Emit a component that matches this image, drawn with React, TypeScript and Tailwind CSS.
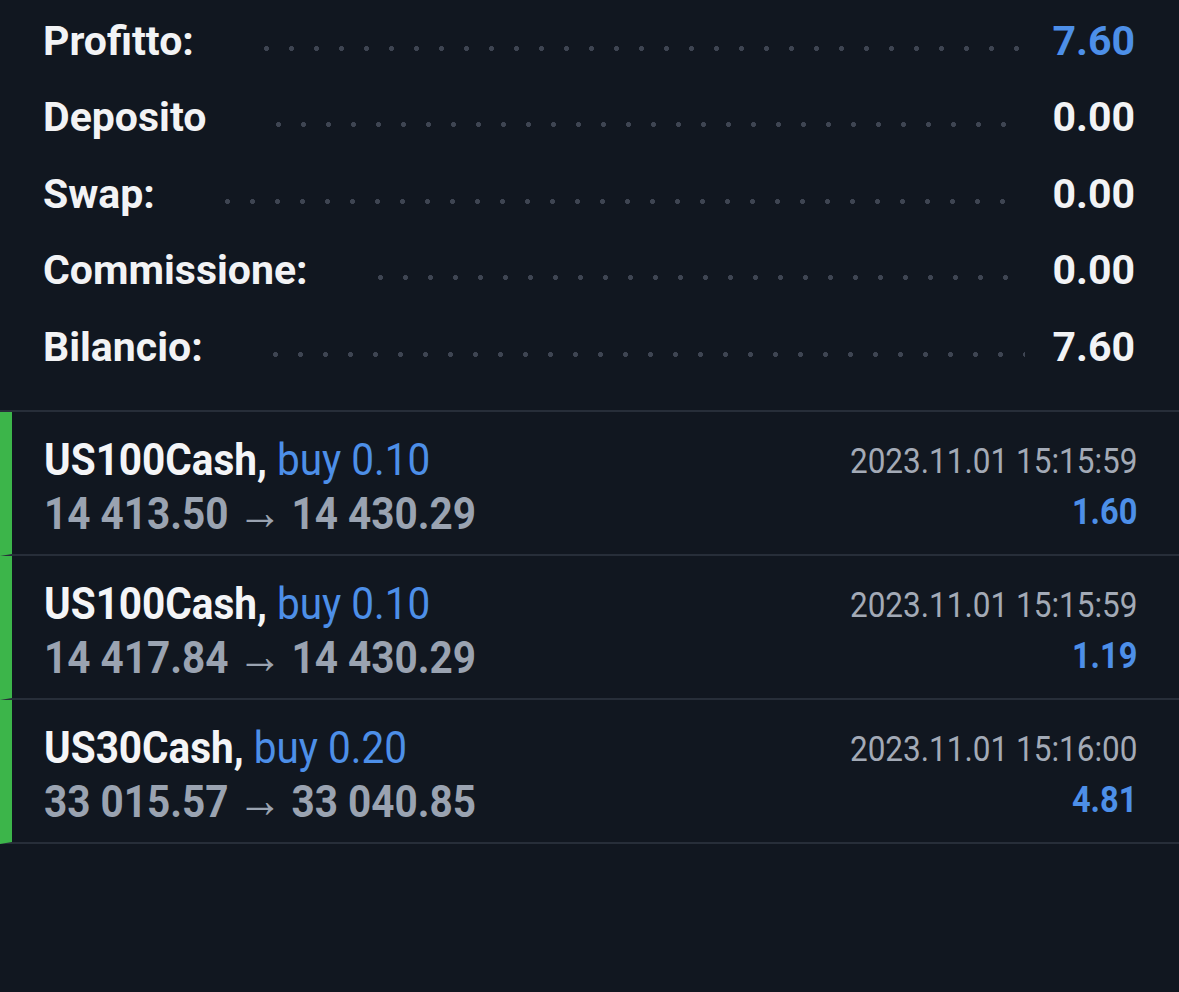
const summary = [
  { label: 'Profitto:', value: '7.60', blue: true },
  { label: 'Deposito', value: '0.00' },
  { label: 'Swap:', value: '0.00' },
  { label: 'Commissione:', value: '0.00' },
  { label: 'Bilancio:', value: '7.60' },
]

const deals = [
  { symbol: 'US100Cash', side: 'buy 0.10', open: '14 413.50', close: '14 430.29', time: '2023.11.01 15:15:59', profit: '1.60' },
  { symbol: 'US100Cash', side: 'buy 0.10', open: '14 417.84', close: '14 430.29', time: '2023.11.01 15:15:59', profit: '1.19' },
  { symbol: 'US30Cash', side: 'buy 0.20', open: '33 015.57', close: '33 040.85', time: '2023.11.01 15:16:00', profit: '4.81' },
]

export default function App() {
  return (
    <div className="w-[1179px] min-h-[992px] bg-[#111720] font-['Roboto',sans-serif] antialiased">
      {/* summary block */}
      <div className="pl-[43px] pr-[44px] pt-[3px] pb-[24px]">
        {summary.map((row) => (
          <div key={row.label} className="flex h-[76.5px] items-center">
            <span className="text-[41px] font-bold leading-none text-[#f2f3f5]">{row.label}</span>
            <div className="mt-[14px] mr-[28px] ml-[60px] h-[5px] flex-1 bg-[radial-gradient(circle,#3e4552_2.2px,transparent_2.8px)] bg-[length:25px_5px] bg-repeat-x" />
            <span className={`text-[41px] font-bold leading-none ${row.blue ? 'text-[#4d8fe8]' : 'text-[#f2f3f5]'}`}>
              {row.value}
            </span>
          </div>
        ))}
      </div>

      {/* deals */}
      <div className="border-t-2 border-[#272e39]">
        {deals.map((d, i) => (
          <div key={i} className="flex border-b-2 border-l-[12px] border-b-[#272e39] border-l-[#3cb54a] pl-[32px] pr-[42px] pt-[22px] pb-[16px]">
            <div className="flex-1">
              <div className="flex h-[52px] items-center">
                <span className="inline-block origin-left scale-x-[0.9] whitespace-nowrap text-[45px] leading-none text-[#f4f5f7]">
                  <span className="font-bold">{d.symbol},</span>
                  <span className="text-[#4d8fe8]"> {d.side}</span>
                </span>
              </div>
              <div className="flex h-[52px] items-center">
                <span className="inline-block origin-left scale-x-[0.9] whitespace-nowrap text-[45px] font-bold leading-none text-[#9aa3b1]">
                  {d.open}
                  <span className="mx-[10px] text-[50px]">→</span>
                  {d.close}
                </span>
              </div>
            </div>
            <div className="flex flex-col items-end">
              <div className="flex h-[52px] items-center pt-[3px]">
                <span className="inline-block origin-right scale-x-[0.9] whitespace-nowrap text-[35px] leading-none text-[#a3aab6]">
                  {d.time}
                </span>
              </div>
              <div className="flex h-[52px] items-center">
                <span className="inline-block origin-right scale-x-[0.88] whitespace-nowrap text-[37px] font-bold leading-none text-[#4d8fe8]">
                  {d.profit}
                </span>
              </div>
            </div>
          </div>
        ))}
      </div>
    </div>
  )
}
